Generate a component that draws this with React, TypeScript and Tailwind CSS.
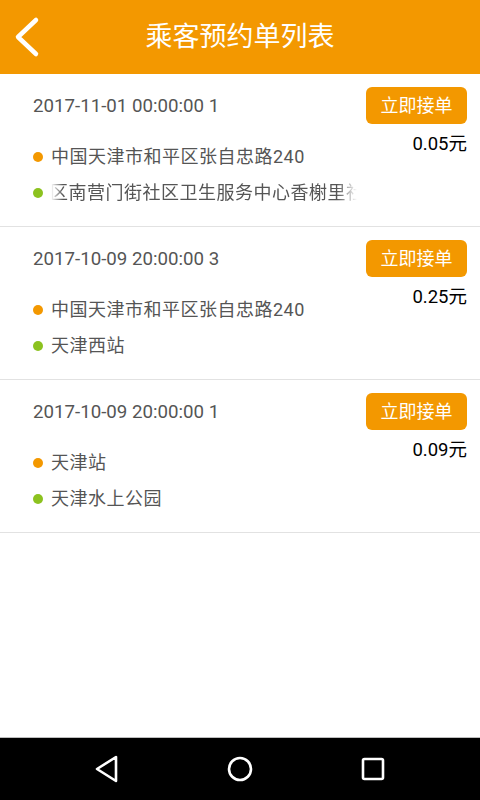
import React from "react";

type Order = {
  date: string;
  price: string;
  from: string;
  to: string;
  marquee?: boolean;
};

const orders: Order[] = [
  {
    date: "2017-11-01 00:00:00 1",
    price: "0.05元",
    from: "中国天津市和平区张自忠路240",
    to: "区南营门街社区卫生服务中心香榭里社区",
    marquee: true,
  },
  {
    date: "2017-10-09 20:00:00 3",
    price: "0.25元",
    from: "中国天津市和平区张自忠路240",
    to: "天津西站",
  },
  {
    date: "2017-10-09 20:00:00 1",
    price: "0.09元",
    from: "天津站",
    to: "天津水上公园",
  },
];

function OrderCard({ o }: { o: Order }) {
  return (
    <div className="flex border-b border-[#e2e2e2] pl-[33px] pr-[13px]">
      <div className="flex min-w-0 flex-1 flex-col pt-[20px] pb-[15px]">
        <div className="h-[24px] text-[18.7px] leading-[24px] text-[#555555]">{o.date}</div>
        <div className="mt-[21px] flex h-[36px] items-center">
          <span className="mr-[8px] h-[10px] w-[10px] shrink-0 rounded-full bg-[#f39800]" />
          <span className="whitespace-nowrap text-[18px] leading-[36px] tracking-[0.5px] text-[#555555]">{o.from}</span>
        </div>
        <div className="flex h-[36px] items-center">
          <span className="mr-[8px] h-[10px] w-[10px] shrink-0 rounded-full bg-[#8cc21f]" />
          {o.marquee ? (
            <div className="w-[306px] overflow-hidden [mask-image:linear-gradient(to_right,transparent_0px,black_12px,black_286px,transparent_306px)]">
              <span className="ml-[-1px] block whitespace-nowrap text-[18px] leading-[36px] tracking-[0.5px] text-[#555555]">{o.to}</span>
            </div>
          ) : (
            <span className="whitespace-nowrap text-[18px] leading-[36px] tracking-[0.5px] text-[#555555]">{o.to}</span>
          )}
        </div>
      </div>
      <div className="flex flex-col items-end pt-[13px]">
        <div className="flex h-[37px] w-[101px] items-center justify-center rounded-[6px] bg-[#f39800] text-[18px] text-white">
          立即接单
        </div>
        <div className="mt-[8px] h-[24px] text-[18.5px] leading-[24px] text-black">{o.price}</div>
      </div>
    </div>
  );
}

export default function App() {
  return (
    <div
      className="flex h-[800px] w-[480px] flex-col overflow-hidden bg-white"
      style={{ fontFamily: 'Roboto, "Noto Sans CJK SC", sans-serif' }}
    >
      <div className="relative flex h-[74px] shrink-0 items-center justify-center bg-[#f39800]">
        <svg className="absolute left-[12px] top-[15px]" width="30" height="44" viewBox="0 0 30 44">
          <polyline points="24,5 6,22 24,39" fill="none" stroke="white" strokeWidth="4.5" strokeLinecap="round" strokeLinejoin="round" />
        </svg>
        <span className="text-[27px] leading-none text-white">乘客预约单列表</span>
      </div>
      <div className="flex-1">
        {orders.map((o, i) => (
          <OrderCard key={i} o={o} />
        ))}
      </div>
      <div className="flex h-[63px] shrink-0 items-center border-t border-[#bdbdbd] bg-black">
        <div className="flex w-full items-center">
          <div className="flex flex-1 justify-end">
            <svg className="mr-[20px]" width="26" height="28" viewBox="0 0 26 28">
              <polygon points="22,2 22,26 3,14" fill="none" stroke="white" strokeWidth="2.6" strokeLinejoin="round" />
            </svg>
          </div>
          <svg className="mx-[87px]" width="26" height="26" viewBox="0 0 26 26">
            <circle cx="13" cy="13" r="11" fill="none" stroke="white" strokeWidth="2.6" />
          </svg>
          <div className="flex flex-1 justify-start">
            <svg className="ml-[21px]" width="24" height="24" viewBox="0 0 24 24">
              <rect x="2" y="2" width="20" height="20" rx="1.5" fill="none" stroke="white" strokeWidth="2.6" />
            </svg>
          </div>
        </div>
      </div>
    </div>
  );
}
